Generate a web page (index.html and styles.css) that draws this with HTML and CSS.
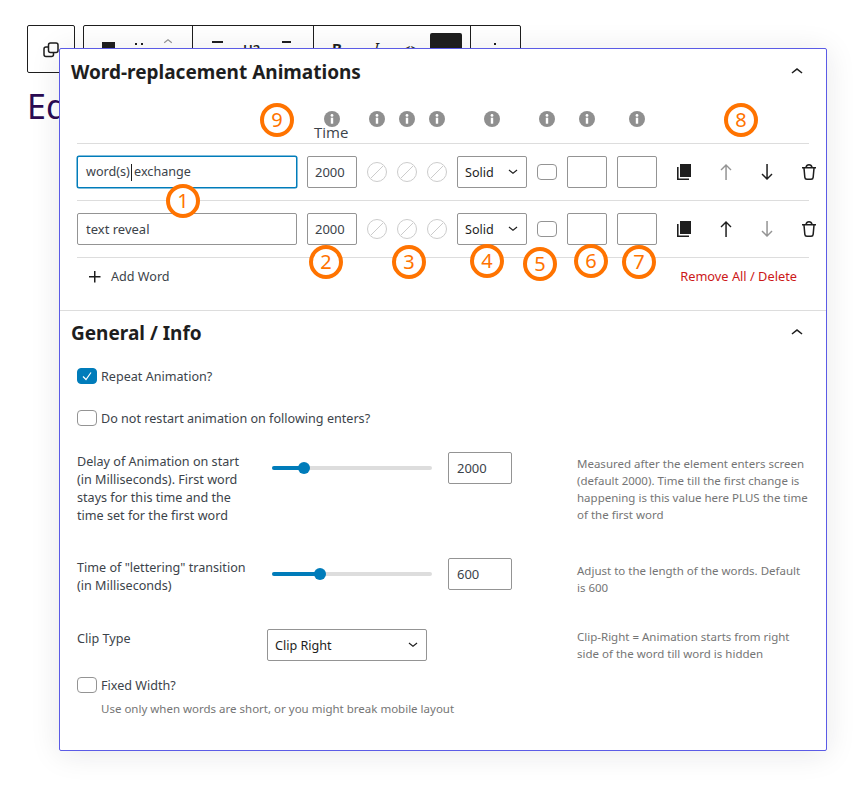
FILE: index.html

```html
<!DOCTYPE html>
<html lang="en">
<head>
  <meta charset="UTF-8" />
  <title>Word-replacement Animations</title>
  <link rel="stylesheet" href="styles.css">
</head>
<body>
  <svg class="defs" width="0" height="0">
    <symbol id="i-info" viewBox="0 0 16 16">
      <circle cx="8" cy="8" r="8" fill="#8f8f8f"/>
      <circle cx="8" cy="4.400" r="1.400" fill="#fff"/>
      <rect x="6.800" y="6.700" width="2.400" height="6" fill="#fff"/>
    </symbol>
    <symbol id="i-none" viewBox="0 0 20 20">
      <circle cx="10" cy="10" r="9.500" fill="#fff" stroke="#ccc"/>
      <path d="M4 16 16 4" stroke="#ccc" fill="none"/>
    </symbol>
    <symbol id="i-chevron" viewBox="0 0 24 24">
      <path d="M6.500 12.400 12 8l5.500 4.400-.9 1.200L12 10l-4.600 3.600z"/>
    </symbol>
    <symbol id="i-down" viewBox="0 0 18 18">
      <path d="M4.600 7.400 9 11l4.400-3.600-.7-.8L9 9.500 5.300 6.600z"/>
    </symbol>
    <symbol id="i-copy" viewBox="0 0 24 24">
      <path d="M8 4h11v13H8z"/>
      <path d="M5 7h1.600v11.400H17V20H5z"/>
    </symbol>
    <symbol id="i-arrow-up" viewBox="0 0 24 24">
      <path d="M12 3.900 6.500 9.500l1 1 3.800-3.700V20h1.500V6.800l3.700 3.700 1-1z"/>
    </symbol>
    <symbol id="i-arrow-down" viewBox="0 0 24 24">
      <path d="m16.500 13.500-3.700 3.700V4h-1.500v13.200l-3.800-3.700-1 1 5.500 5.600 5.500-5.600z"/>
    </symbol>
    <symbol id="i-trash" viewBox="0 0 24 24">
      <path fill-rule="evenodd" d="M12 5.500A2.250 2.250 0 0 0 9.878 7h4.244A2.251 2.251 0 0 0 12 5.500ZM12 4a3.751 3.751 0 0 0-3.675 3H5v1.500h1.270l.818 8.997a2.750 2.750 0 0 0 2.739 2.501h4.347a2.750 2.750 0 0 0 2.738-2.500L17.730 8.500H19V7h-3.325A3.751 3.751 0 0 0 12 4Zm4.224 4.500H7.776l.806 8.861a1.250 1.250 0 0 0 1.245 1.137h4.347a1.250 1.250 0 0 0 1.245-1.137l.805-8.861Z"/>
    </symbol>
  </svg>

  <!-- editor behind the popover -->
  <div class="toolbar">
    <div class="tool-group tool-single">
      <svg class="tool-copy" width="16" height="16" viewBox="0 0 16 16"><rect x="1" y="5" width="9.500" height="9.500" rx="2"/><rect x="5.500" y="1" width="9.500" height="9.500" rx="2"/></svg>
    </div>
    <div class="tool-group">
      <div class="tool-cell tool-a">
        <span class="t-block"></span>
        <span class="t-dots"></span>
        <svg class="t-chevron" width="18" height="18"><use href="#i-chevron"/></svg>
      </div>
      <div class="tool-cell tool-b">
        <span class="t-line t-line-l"></span>
        <span class="t-h2">H2</span>
        <span class="t-line t-line-r"></span>
      </div>
      <div class="tool-cell tool-c">
        <b class="t-b">B</b>
        <i class="t-i">I</i>
        <span class="t-code">&lt;&gt;</span>
        <span class="t-swatch"></span>
      </div>
      <div class="tool-cell tool-d"><span class="t-dot"></span></div>
    </div>
  </div>
  <h1 class="post-title">Edit</h1>

  <div class="popover">
    <section class="panel panel-words">
      <header class="panel-head">
        <h2>Word-replacement Animations</h2>
        <svg class="icon" width="24" height="24"><use href="#i-chevron"/></svg>
      </header>

      <div class="word-grid word-head">
        <span></span>
        <span class="head-cell"><svg width="16" height="16"><use href="#i-info"/></svg><em class="time-label">Time</em></span>
        <span class="head-cell"><svg width="16" height="16"><use href="#i-info"/></svg></span>
        <span class="head-cell"><svg width="16" height="16"><use href="#i-info"/></svg></span>
        <span class="head-cell"><svg width="16" height="16"><use href="#i-info"/></svg></span>
        <span class="head-cell"><svg width="16" height="16"><use href="#i-info"/></svg></span>
        <span class="head-cell"><svg width="16" height="16"><use href="#i-info"/></svg></span>
        <span class="head-cell"><svg width="16" height="16"><use href="#i-info"/></svg></span>
        <span class="head-cell"><svg width="16" height="16"><use href="#i-info"/></svg></span>
      </div>

      <div class="word-grid word-row">
        <div class="field field-focus">word(s)<span class="caret"></span> exchange</div>
        <input class="field field-time" type="text" value="2000">
        <svg width="20" height="20"><use href="#i-none"/></svg>
        <svg width="20" height="20"><use href="#i-none"/></svg>
        <svg width="20" height="20"><use href="#i-none"/></svg>
        <div class="select">Solid<svg width="18" height="18"><use href="#i-down"/></svg></div>
        <span class="check"></span>
        <input class="field" type="text">
        <input class="field" type="text">
        <div class="row-actions">
          <svg class="icon" width="24" height="24"><use href="#i-copy"/></svg>
          <svg class="icon icon-off" width="24" height="24"><use href="#i-arrow-up"/></svg>
          <svg class="icon" width="24" height="24"><use href="#i-arrow-down"/></svg>
          <svg class="icon" width="24" height="24"><use href="#i-trash"/></svg>
        </div>
      </div>

      <div class="word-grid word-row">
        <input class="field" type="text" value="text reveal">
        <input class="field field-time" type="text" value="2000">
        <svg width="20" height="20"><use href="#i-none"/></svg>
        <svg width="20" height="20"><use href="#i-none"/></svg>
        <svg width="20" height="20"><use href="#i-none"/></svg>
        <div class="select">Solid<svg width="18" height="18"><use href="#i-down"/></svg></div>
        <span class="check"></span>
        <input class="field" type="text">
        <input class="field" type="text">
        <div class="row-actions">
          <svg class="icon" width="24" height="24"><use href="#i-copy"/></svg>
          <svg class="icon" width="24" height="24"><use href="#i-arrow-up"/></svg>
          <svg class="icon icon-off" width="24" height="24"><use href="#i-arrow-down"/></svg>
          <svg class="icon" width="24" height="24"><use href="#i-trash"/></svg>
        </div>
      </div>

      <div class="word-foot">
        <span class="add-word">
          <svg class="icon" width="24" height="24" viewBox="0 0 24 24"><path d="M11 12.500V17.500H12.500V12.500H17.500V11H12.500V6H11V11H6V12.500H11Z"/></svg>
          Add Word
        </span>
        <span class="remove-all">Remove All / Delete</span>
      </div>
    </section>

    <section class="panel panel-general">
      <header class="panel-head">
        <h2>General / Info</h2>
        <svg class="icon" width="24" height="24"><use href="#i-chevron"/></svg>
      </header>

      <div class="check-row check-repeat">
        <span class="check check-on">
          <svg width="14" height="14" viewBox="0 0 14 14"><path d="M3 7.500 6 10.500 11 3.500" fill="none" stroke="#fff" stroke-width="1.200"/></svg>
        </span>
        Repeat Animation?
      </div>
      <div class="check-row check-restart"><span class="check"></span>Do not restart animation on following enters?</div>

      <div class="setting setting-delay">
        <div class="setting-label">Delay of Animation on start (in Milliseconds). First word stays for this time and the time set for the first word</div>
        <div class="setting-control">
          <div class="slider"><span class="slider-fill" style="width: 32px"></span></div>
          <input class="field field-num" type="text" value="2000">
        </div>
        <p class="setting-help">Measured after the element enters screen (default 2000). Time till the first change is happening is this value here PLUS the time of the first word</p>
      </div>

      <div class="setting setting-time">
        <div class="setting-label">Time of "lettering" transition (in Milliseconds)</div>
        <div class="setting-control">
          <div class="slider"><span class="slider-fill" style="width: 48px"></span></div>
          <input class="field field-num" type="text" value="600">
        </div>
        <p class="setting-help">Adjust to the length of the words. Default is 600</p>
      </div>

      <div class="setting setting-clip">
        <div class="setting-label">Clip Type</div>
        <div class="select select-wide">Clip Right<svg width="18" height="18"><use href="#i-down"/></svg></div>
        <p class="setting-help">Clip-Right = Animation starts from right side of the word till word is hidden</p>
      </div>

      <div class="check-row check-fixed"><span class="check"></span>Fixed Width?</div>
      <p class="check-help">Use only when words are short, or you might break mobile layout</p>
    </section>

    <!-- numbered callouts drawn over the screenshot -->
    <span class="badge" style="left: 200px; top: 54px">9</span>
    <span class="badge" style="left: 664px; top: 54px">8</span>
    <span class="badge" style="left: 106px; top: 135px">1</span>
    <span class="badge" style="left: 249px; top: 196px">2</span>
    <span class="badge" style="left: 332px; top: 196px">3</span>
    <span class="badge" style="left: 410px; top: 195px">4</span>
    <span class="badge" style="left: 463px; top: 198px">5</span>
    <span class="badge" style="left: 514px; top: 195px">6</span>
    <span class="badge" style="left: 562px; top: 196px">7</span>
  </div>
</body>
</html>
```

FILE: styles.css

```css
* {
  box-sizing: border-box;
}
body {
  margin: 0;
  padding: 25px 27px 0;
  background: #fff;
  color: #1e1e1e;
  font-family: "Noto Sans", sans-serif;
  font-size: 12.6px;
}
.defs {
  position: absolute;
}
.icon {
  fill: #1e1e1e;
  display: block;
  flex: none;
}
.icon-off {
  fill: #949494;
}

/* toolbar behind */
.toolbar {
  display: flex;
  gap: 8px;
  height: 48px;
}
.tool-group {
  display: flex;
  height: 48px;
  border: 1px solid #1e1e1e;
  border-radius: 2px;
}
.tool-single {
  width: 48px;
  justify-content: center;
  padding-top: 16px;
}
.tool-copy {
  fill: #fff;
  stroke: #1e1e1e;
  stroke-width: 1.5;
}
.tool-cell {
  position: relative;
  border-right: 1px solid #1e1e1e;
}
.tool-a { width: 109px; }
.tool-b { width: 121px; }
.tool-c { width: 157px; }
.tool-d { width: 49px; border-right: 0; }
.tool-cell > * {
  position: absolute;
}
.t-block { left: 18px; top: 16px; width: 13px; height: 13px; background: #1e1e1e; }
.t-dots { left: 51px; top: 17px; width: 8px; height: 2px; border-left: 2px solid #1e1e1e; border-right: 2px solid #1e1e1e; }
.t-chevron { left: 75px; top: 7px; fill: #949494; }
.t-line { top: 15px; height: 2px; background: #1e1e1e; }
.t-line-l { left: 19px; width: 11px; }
.t-line-r { left: 89px; width: 9px; }
.t-h2 { left: 50px; top: 14px; font-size: 13px; font-weight: 600; }
.t-b { left: 18px; top: 12px; font-size: 15px; }
.t-i { left: 60px; top: 11px; font-size: 15px; }
.t-code { left: 88px; top: 13px; font-size: 15px; }
.t-swatch { left: 116px; top: 7px; width: 32px; height: 30px; background: #1e1e1e; border-radius: 2px; }
.t-dot { left: 23px; top: 17px; width: 2px; height: 2px; background: #1e1e1e; }
.post-title {
  margin: 11px 0 0;
  font-family: "Noto Sans", sans-serif;
  font-size: 34px;
  font-weight: 400;
  line-height: 44px;
  color: #2a0a52;
}

/* popover */
.popover {
  position: absolute;
  left: 59px;
  top: 48px;
  width: 768px;
  height: 703px;
  background: #fff;
  border: 1px solid #5b5be6;
  border-radius: 2px;
  box-shadow: 0 3px 30px rgba(25, 30, 35, 0.1);
}
.panel-head {
  display: flex;
  justify-content: space-between;
  align-items: center;
  padding: 0 17px 0 11px;
}
.panel-head h2 {
  margin: 0;
  font-size: 19px;
  font-weight: 700;
  line-height: 24px;
}
.panel-words {
  height: 262px;
  padding-top: 11px;
  border-bottom: 1px solid #ddd;
}
.panel-general {
  padding-top: 10px;
}

/* word rows */
.word-grid {
  display: grid;
  grid-template-columns: 220px 50px 20px 20px 20px 70px 20px 40px 40px 155px;
  column-gap: 10px;
  align-items: center;
  margin: 0 17px;
  width: 732px;
}
.word-head {
  height: 60px;
  border-bottom: 1px solid #ddd;
  padding-top: 27px;
  padding-bottom: 16px;
}
.head-cell {
  position: relative;
  display: flex;
  justify-content: center;
}
.time-label {
  position: absolute;
  top: 12px;
  left: 7px;
  font-family: "Open Sans", sans-serif;
  font-style: normal;
  font-size: 15px;
  line-height: 18px;
  color: #3c434a;
}
.word-row {
  height: 57px;
  border-bottom: 1px solid #ddd;
}
.field {
  display: block;
  width: 100%;
  height: 32px;
  padding: 0 8px;
  border: 1px solid #949494;
  border-radius: 2px;
  background: #fff;
  color: #3c434a;
  font: 13px/30px "Noto Sans", sans-serif;
}
.field-time {
  padding: 0 7px;
}
.field-focus {
  border-color: #007cba;
  box-shadow: 0 0 0 0.5px #007cba;
  font-size: 12.6px;
}
.caret {
  display: inline-block;
  width: 1px;
  height: 17px;
  margin-left: 1px;
  margin-right: -1px;
  vertical-align: middle;
  background: #1e1e1e;
}
.select {
  display: flex;
  justify-content: space-between;
  align-items: center;
  height: 32px;
  padding: 0 4px 0 7px;
  border: 1px solid #949494;
  border-radius: 2px;
  font-size: 12.6px;
  color: #1e1e1e;
}
.select svg {
  fill: #1e1e1e;
}
.check {
  display: flex;
  align-items: center;
  justify-content: center;
  flex: none;
  width: 20px;
  height: 16px;
  border: 1px solid #949494;
  border-radius: 4px;
  background: #fff;
}
.check-on {
  background: #007cba;
  border-color: #007cba;
}
.row-actions {
  display: flex;
  gap: 17.5px;
  padding-left: 5px;
}
.word-foot {
  display: flex;
  justify-content: space-between;
  align-items: center;
  margin: 0 29px 0 17px;
  height: 37px;
}
.add-word {
  display: flex;
  align-items: center;
  gap: 4px;
  padding-left: 6px;
  color: #3c434a;
}
.remove-all {
  padding-bottom: 2px;
  color: #cc1818;
  font-size: 12.8px;
}

/* general */
.check-row {
  display: flex;
  align-items: flex-start;
  gap: 4px;
  margin-left: 17px;
  color: #3c434a;
  line-height: 18px;
}
.check-repeat { margin-top: 23px; }
.check-restart { margin-top: 24px; }
.check-help {
  margin: 5px 0 0 41px;
  color: #757575;
  font-size: 11.5px;
  line-height: 18px;
}
.setting {
  display: flex;
  margin-left: 17px;
}
.setting-label {
  width: 178px;
  margin-right: 12px;
  padding-top: 1px;
  color: #3c434a;
  line-height: 18px;
}
.setting-control {
  display: flex;
  width: 245px;
  padding-left: 5px;
  gap: 16px;
}
.slider {
  position: relative;
  width: 160px;
  height: 4px;
  margin-top: 14px;
  border-radius: 2px;
  background: #ddd;
}
.slider-fill {
  position: absolute;
  left: 0;
  top: 0;
  height: 4px;
  border-radius: 2px;
  background: #007cba;
}
.slider-fill::after {
  content: "";
  position: absolute;
  right: -6px;
  top: -4px;
  width: 12px;
  height: 12px;
  border-radius: 50%;
  background: #007cba;
}
.field-num {
  width: 64px;
}
.setting-help {
  width: 232px;
  margin: 3px 0 0 65px;
  color: #757575;
  font-size: 11.5px;
  line-height: 17px;
}
.setting-delay { margin-top: 24px; height: 106px; }
.setting-time { height: 71px; }
.setting-time .setting-help { margin-top: 4px; }
.setting-clip { height: 48px; }
.select-wide { width: 160px; }
.setting-clip .setting-help { margin: -1px 0 0 150px; }

/* callouts */
.badge {
  position: absolute;
  display: flex;
  align-items: center;
  justify-content: center;
  width: 34px;
  height: 34px;
  border: 4px solid #ff7300;
  border-radius: 50%;
  background: #fff;
  color: #ff7300;
  font-size: 20px;
  line-height: 1;
}
```
